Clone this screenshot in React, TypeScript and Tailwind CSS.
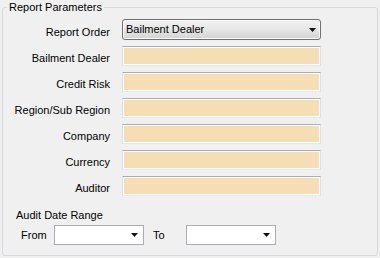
import React from 'react'

const font = { fontFamily: '"Liberation Sans", Arial, sans-serif' }

const fields = ['Bailment Dealer', 'Credit Risk', 'Region/Sub Region', 'Company', 'Currency', 'Auditor']

function Arrow() {
  return (
    <svg width="7" height="4" viewBox="0 0 7 4" className="shrink-0">
      <path d="M0 0h7L3.5 4z" fill="#111111" />
    </svg>
  )
}

function TextBox() {
  return (
    <div className="h-[20px] w-[199px] border border-t-[#abadb3] border-x-[#dbdfe6] border-b-[#e3e9ef] bg-[#f5deb3] shadow-[inset_0_0_0_1px_#ffffff]" />
  )
}

function DateCombo() {
  return (
    <div className="flex h-[20px] w-[90px] items-center justify-end border border-[#abadb3] bg-white pr-[5px]">
      <Arrow />
    </div>
  )
}

export default function App() {
  return (
    <div className="h-[258px] w-[380px] bg-[#f0f0f0] pl-[2px] pt-[7px] text-[11px] text-black" style={font}>
      <div className="relative h-[249px] w-[376px] rounded-[3px] border border-[#d5d9de]">
        {/* group title */}
        <span className="absolute left-[4px] top-[-8px] bg-[#f0f0f0] px-[2px] leading-[14px]">Report Parameters</span>

        <div className="flex flex-col gap-[6px] pt-[11px]">
          <div className="flex items-start">
            <span className="w-[107px] pt-[7px] text-right leading-[13px]">Report Order</span>
            <div className="ml-[12px] flex h-[21px] w-[199px] items-center justify-between rounded-[3px] border border-[#707070] bg-gradient-to-b from-[#f2f2f2] via-[#e6e6e6] to-[#d3d3d3] pl-[3px] pr-[4px] shadow-[inset_0_0_0_1px_#fafafa]">
              <span>Bailment Dealer</span>
              <Arrow />
            </div>
          </div>
          {fields.map((f) => (
            <div key={f} className="flex items-start">
              <span className="w-[107px] pt-[6px] text-right leading-[13px]">{f}</span>
              <div className="ml-[12px]">
                <TextBox />
              </div>
            </div>
          ))}
        </div>

        <div className="mt-[12px] pl-[13px] leading-[14px]">Audit Date Range</div>
        <div className="mt-[3px] flex items-center">
          <span className="ml-[18px] w-[33px]">From</span>
          <DateCombo />
          <span className="ml-[9px] w-[33px]">To</span>
          <DateCombo />
        </div>
      </div>
    </div>
  )
}
